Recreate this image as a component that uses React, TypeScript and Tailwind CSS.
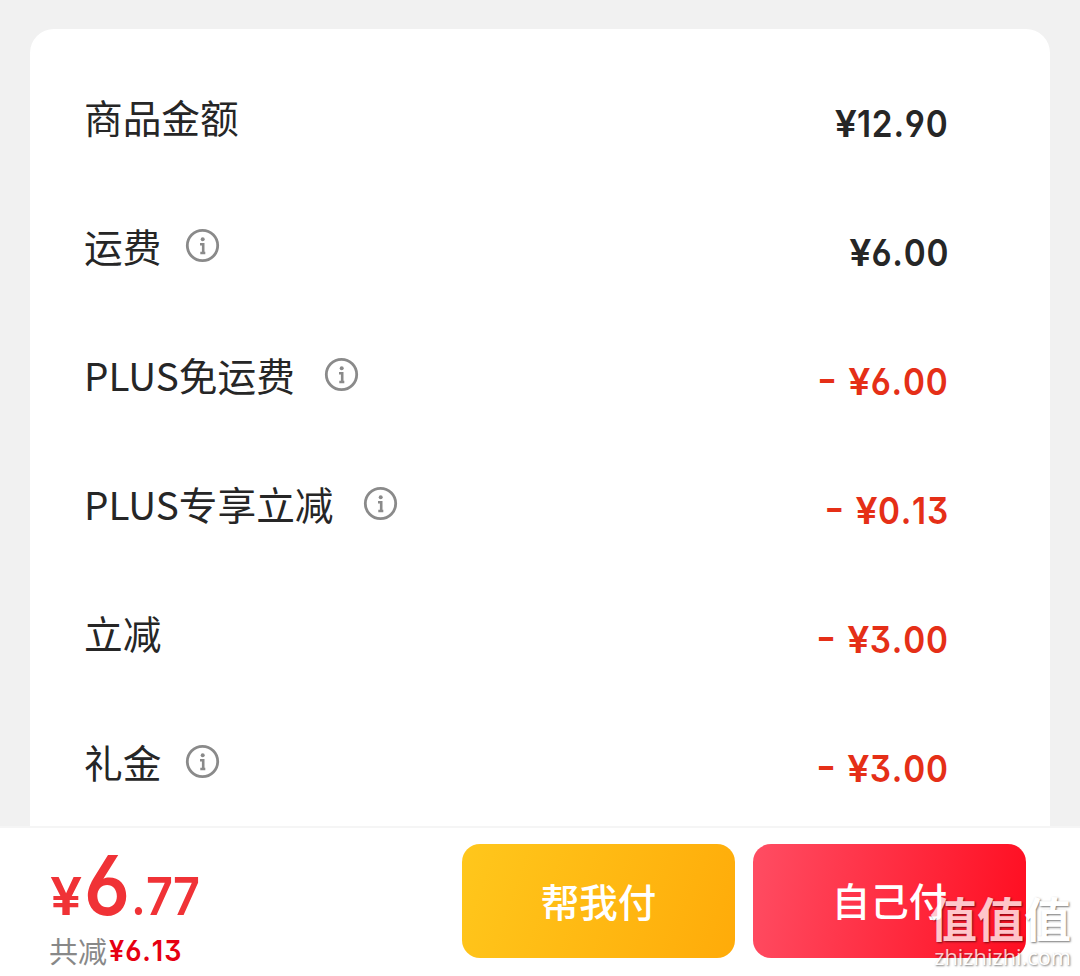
import clsx from "clsx";

type Row = {
  label: string;
  price: string;
  info?: boolean;
  discount?: boolean;
};

const rows: Row[] = [
  { label: "商品金额", price: "12.90" },
  { label: "运费", price: "6.00", info: true },
  { label: "PLUS免运费", price: "6.00", info: true, discount: true },
  { label: "PLUS专享立减", price: "0.13", info: true, discount: true },
  { label: "立减", price: "3.00", discount: true },
  { label: "礼金", price: "3.00", info: true, discount: true },
];

const digits =
  "font-['Inter',sans-serif] [font-feature-settings:'cv03','cv04','cv09'] [font-kerning:none]";

function InfoIcon({ wide }: { wide: boolean }) {
  return (
    <svg
      className={clsx("mb-1.5 size-[35px] text-[#8a8a8a]", wide ? "ml-[29px]" : "ml-6")}
      viewBox="0 0 35 35"
      fill="none"
    >
      <circle cx="17.5" cy="17.5" r="15.2" stroke="currentColor" strokeWidth="2.8" />
      <circle cx="17.7" cy="11.3" r="2" fill="currentColor" />
      <path d="M15 16.2h3.2v8.6M15.3 25h5" stroke="currentColor" strokeWidth="2.6" />
    </svg>
  );
}

function PriceRow({ row }: { row: Row }) {
  return (
    <div className="flex h-[129px] items-center justify-between">
      <div className="flex items-center">
        <span className="-ml-px -mt-1.5 text-[38.7px] leading-none">{row.label}</span>
        {row.info && <InfoIcon wide={row.label.startsWith("PLUS")} />}
      </div>
      <div
        className={clsx(
          "mt-2 -mr-px flex origin-right scale-x-[0.9] items-center text-[37px] leading-none font-semibold",
          digits,
          row.discount && "text-[#e52f17]"
        )}
      >
        {row.discount && <span className="mr-[17px] -mt-1.5 scale-x-130">-</span>}
        <span className="scale-x-118">¥</span>
        <span className="ml-0.5 -mr-px tracking-[0.9px]">{row.price}</span>
      </div>
    </div>
  );
}

function Watermark() {
  return (
    <div className="absolute top-[61px] right-[9px] flex flex-col items-end text-white opacity-75 [text-shadow:1px_1px_2px_rgba(0,0,0,0.7)]">
      <span className="text-[47px] leading-[56px] font-bold">值值值</span>
      <span className="font-['Open_Sans',sans-serif] text-[21.8px] leading-6 font-medium">zhizhizhi.com</span>
    </div>
  );
}

function PayBar() {
  return (
    <footer className="relative flex h-[150px] justify-between border-t-2 border-[#f5f5f5] bg-white pt-5 pr-[54px] pl-[50px]">
      <div>
        <div className={clsx("flex items-baseline leading-[75px] font-semibold text-[#f03236]", digits)}>
          <span className="origin-left scale-x-110 text-[52px]">¥</span>
          <span className="ml-[5px] origin-left scale-x-[0.92] text-[83px]">6</span>
          <span className="-ml-[3px] origin-left scale-x-[0.9] text-[52px]">.77</span>
        </div>
        <div className="mt-px flex items-center text-[29px] leading-8 text-[#888]">
          <span className="-ml-px -mt-0.5">共减</span>
          <span className={clsx("ml-0.5 origin-left scale-x-[0.93] tracking-[1px] text-[29px] font-semibold text-[#e60012]", digits)}>
            ¥6.13
          </span>
        </div>
      </div>
      <div className="-mt-1 flex gap-[18px]">
        <button className="h-[114px] w-[273px] rounded-[18px] bg-linear-[110deg] from-[#ffc71c] to-[#ffab09] text-[38.5px] font-medium text-white">
          帮我付
        </button>
        <button className="h-[114px] w-[273px] rounded-[18px] bg-linear-[100deg] from-[#ff4d63] to-[#ff0d20] pb-0.5 text-[38.5px] font-medium text-white">
          自己付
        </button>
      </div>
      <Watermark />
    </footer>
  );
}

export default function App() {
  return (
    <div className="flex h-[976px] flex-col overflow-hidden bg-[#f1f1f1] font-['Noto_Sans_CJK_SC',sans-serif] text-[#262626]">
      <main className="mx-[30px] mt-[29px] h-[797px] overflow-hidden rounded-t-[24px] bg-white pt-[26px] pr-[103px] pl-[55px]">
        {rows.map((row) => (
          <PriceRow key={row.label} row={row} />
        ))}
      </main>
      <PayBar />
    </div>
  );
}
